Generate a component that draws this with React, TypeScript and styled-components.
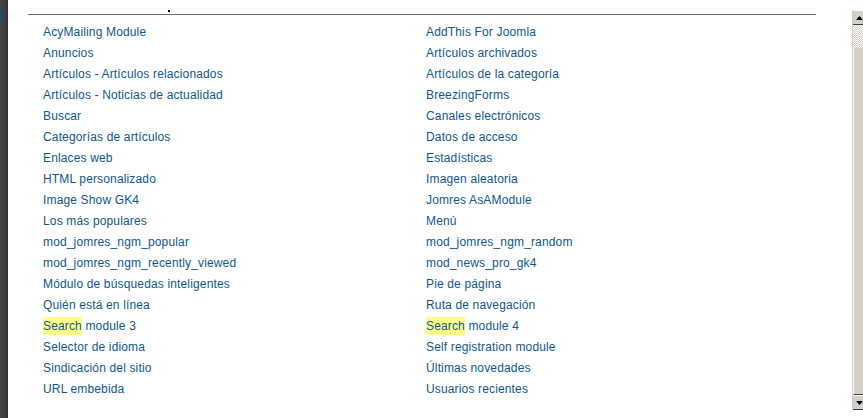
import React from "react";
import styled, { createGlobalStyle } from "styled-components";

const Global = createGlobalStyle`
  html, body { margin: 0; padding: 0; background: #ffffff; }
  body { font-family: "Liberation Sans", Arial, sans-serif; overflow: hidden; }
`;

const Page = styled.div`
  display: flex;
  width: 863px;
  height: 418px;
  overflow: hidden;
`;

const Backdrop = styled.div`
  width: 8px;
  flex: none;
  background: linear-gradient(to right, #474747, #3a3a3a 80%, #2e2e2e);
  overflow: hidden;
  position: relative;
`;

const BackdropLetter = styled.span`
  position: absolute;
  left: -9px;
  top: 4px;
  font-size: 22px;
  color: #1f4d74;
  font-family: "Liberation Sans", Arial, sans-serif;
`;

const Main = styled.div`
  flex: 1;
  display: flex;
  flex-direction: column;
  padding: 14px 36px 0 20px;
  position: relative;
`;

const Dot = styled.span`
  position: absolute;
  left: 160px;
  top: 10px;
  width: 2px;
  height: 2px;
  background: #000;
`;

const Rule = styled.div`
  height: 1px;
  background: #6b6b6b;
`;

const List = styled.ul`
  list-style: none;
  margin: 7px 0 0 15px;
  padding: 0;
  display: grid;
  grid-template-columns: 383px 383px;
  grid-auto-flow: column;
  grid-template-rows: repeat(18, 21px);
`;

const Item = styled.li`
  font-size: 12px;
  line-height: 21px;
  letter-spacing: 0.15px;
  color: #0f5889;
  white-space: nowrap;
`;

const Mark = styled.span`
  background: #ffff8c;
  padding: 2px 0;
`;

const Scrollbar = styled.div`
  width: 11px;
  flex: none;
  margin-top: 10px;
  height: 400px;
  display: flex;
  flex-direction: column;
  border-left: 1px solid #d4d0c8;
  box-sizing: border-box;
`;

const ArrowBtn = styled.div`
  height: 15px;
  flex: none;
  background: #d4d0c8;
  border-top: 1px solid #ffffff;
  border-bottom: 1px solid #404040;
  box-sizing: border-box;
  display: flex;
  align-items: center;
  justify-content: center;
  padding-left: 2px;
`;

const Track = styled.div`
  height: 23px;
  flex: none;
  background-color: #e8e6e2;
  background-image: repeating-conic-gradient(#d4d0c8 0 25%, #ffffff 0 50%);
  background-size: 2px 2px;
`;

const Thumb = styled.div`
  flex: 1;
  background: #d4d0c8;
  border-left: 1px solid #ffffff;
  border-bottom: 1px solid #404040;
`;

const left = [
  "AcyMailing Module",
  "Anuncios",
  "Artículos - Artículos relacionados",
  "Artículos - Noticias de actualidad",
  "Buscar",
  "Categorías de artículos",
  "Enlaces web",
  "HTML personalizado",
  "Image Show GK4",
  "Los más populares",
  "mod_jomres_ngm_popular",
  "mod_jomres_ngm_recently_viewed",
  "Módulo de búsquedas inteligentes",
  "Quién está en línea",
  "@Search module 3",
  "Selector de idioma",
  "Sindicación del sitio",
  "URL embebida",
];

const right = [
  "AddThis For Joomla",
  "Artículos archivados",
  "Artículos de la categoría",
  "BreezingForms",
  "Canales electrónicos",
  "Datos de acceso",
  "Estadísticas",
  "Imagen aleatoria",
  "Jomres AsAModule",
  "Menú",
  "mod_jomres_ngm_random",
  "mod_news_pro_gk4",
  "Pie de página",
  "Ruta de navegación",
  "@Search module 4",
  "Self registration module",
  "Últimas novedades",
  "Usuarios recientes",
];

const renderItem = (t: string) =>
  t.startsWith("@") ? (
    <Item key={t}>
      <Mark>Search</Mark>
      {t.slice(7)}
    </Item>
  ) : (
    <Item key={t}>{t}</Item>
  );

const Arrow = ({ down }: { down?: boolean }) => (
  <svg width="7" height="4" viewBox="0 0 7 4">
    <path d={down ? "M0 0 H7 L3.5 4 Z" : "M3.5 0 L7 4 H0 Z"} fill="#000" />
  </svg>
);

export default function App() {
  return (
    <Page>
      <Global />
      <Backdrop>
        <BackdropLetter>d</BackdropLetter>
      </Backdrop>
      <Main>
        <Dot />
        <Rule />
        <List>
          {left.map(renderItem)}
          {right.map(renderItem)}
        </List>
      </Main>
      <Scrollbar>
        <ArrowBtn>
          <Arrow />
        </ArrowBtn>
        <Track />
        <Thumb />
        <ArrowBtn>
          <Arrow down />
        </ArrowBtn>
      </Scrollbar>
    </Page>
  );
}
